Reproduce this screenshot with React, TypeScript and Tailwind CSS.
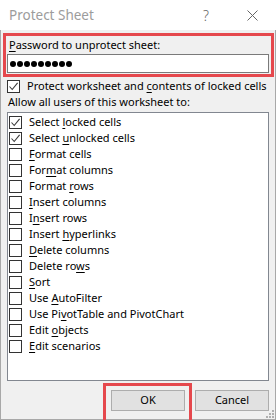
import React from "react";

type Item = [string, string, string, boolean?];

const items: Item[] = [
  ["Select ", "l", "ocked cells", true],
  ["Select ", "u", "nlocked cells", true],
  ["", "F", "ormat cells"],
  ["For", "m", "at columns"],
  ["Format ", "r", "ows"],
  ["", "I", "nsert columns"],
  ["I", "n", "sert rows"],
  ["Insert ", "h", "yperlinks"],
  ["", "D", "elete columns"],
  ["Delete ro", "w", "s"],
  ["", "S", "ort"],
  ["Use ", "A", "utoFilter"],
  ["Use Pi", "v", "otTable and PivotChart"],
  ["Edit ", "o", "bjects"],
  ["", "E", "dit scenarios"],
];

function Box({ checked }: { checked?: boolean }) {
  return (
    <span className="w-[13px] h-[13px] border border-[#333333] bg-white flex items-center justify-center shrink-0">
      {checked && (
        <svg width="11" height="11" viewBox="0 0 11 11">
          <path d="M1.5 5.5 L4.2 8.5 L9.6 1.8" stroke="#3a3a3a" strokeWidth="1.1" fill="none" />
        </svg>
      )}
    </span>
  );
}

function Label({ pre, k, post }: { pre: string; k: string; post: string }) {
  return (
    <span className="whitespace-pre">
      {pre}
      <span className="underline underline-offset-2">{k}</span>
      {post}
    </span>
  );
}

export default function App() {
  return (
    <div
      className="w-[276px] h-[420px] bg-[#f0f0f0] flex flex-col relative overflow-hidden text-[11px] text-black"
      style={{ fontFamily: '"Noto Sans", sans-serif' }}
    >
      <div className="h-[30px] bg-white flex items-center shrink-0 relative">
        <span className="pl-[9px] text-[13.5px] text-[#9c9c9c]">Protect Sheet</span>
        <span className="absolute left-[203px] top-[5px] text-[14px] font-light text-[#666666]">?</span>
        <svg className="absolute left-[247px] top-[10px]" width="11" height="11" viewBox="0 0 11 11">
          <path d="M0.5 0.5 L10.5 10.5 M10.5 0.5 L0.5 10.5" stroke="#666" strokeWidth="1" fill="none" />
        </svg>
      </div>
      <div className="flex-1 flex flex-col border-l border-r border-b border-[#a8a8a8]">
        <div className="mt-[3px] ml-[2px] w-[271px] border-[3px] border-[#e5484d] flex flex-col">
          <div className="h-[18px] pl-[3px] flex items-center">
            <Label pre="" k="P" post="assword to unprotect sheet:" />
          </div>
          <div className="ml-[1px] w-[262px] h-[19px] mb-[1px] border border-[#7a7a7a] bg-white flex items-center pl-[2px] gap-[1px]">
            {Array.from({ length: 9 }).map((_, i) => (
              <span key={i} className="w-[6px] h-[6px] rounded-full bg-black" />
            ))}
          </div>
        </div>
        <div className="mt-[1px] h-[16px] pl-[6px] flex items-center gap-[7px]">
          <Box checked />
          <Label pre="Protect worksheet and " k="c" post="ontents of locked cells" />
        </div>
        <div className="h-[17px] pl-[7px] flex items-center">Allow all users of this worksheet to:</div>
        <div className="mt-[1px] ml-[6px] w-[262px] h-[269px] border border-[#828790] bg-white pt-[1px] flex flex-col">
          {items.map(([pre, k, post, c], i) => (
            <div key={i} className="h-[16px] pl-[1px] flex items-center gap-[7px] shrink-0">
              <Box checked={c} />
              <Label pre={pre} k={k} post={post} />
            </div>
          ))}
        </div>
        <div className="mt-[9px] mr-[6px] flex justify-end gap-[10px]">
          <div className="w-[74px] h-[21px] bg-[#e1e1e1] border border-[#adadad] flex items-center justify-center">
            OK
          </div>
          <div className="w-[74px] h-[21px] bg-[#e1e1e1] border border-[#adadad] flex items-center justify-center">
            Cancel
          </div>
        </div>
      </div>
      <div className="absolute left-[103px] top-[383px] w-[89px] h-[40px] border-[3px] border-[#e5484d]" />
      <svg className="absolute left-[266px] top-[410px]" width="9" height="9" viewBox="0 0 9 9">
        <g fill="#b0b0b0">
          <rect x="6" y="0" width="2" height="2" />
          <rect x="3" y="3" width="2" height="2" />
          <rect x="6" y="3" width="2" height="2" />
          <rect x="0" y="6" width="2" height="2" />
          <rect x="3" y="6" width="2" height="2" />
          <rect x="6" y="6" width="2" height="2" />
        </g>
      </svg>
    </div>
  );
}
